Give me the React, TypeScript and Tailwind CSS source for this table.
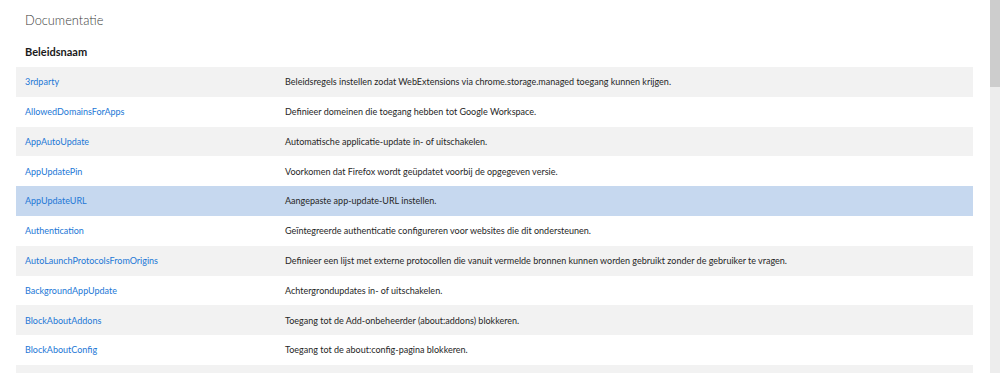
import React from "react";

const rows: [string, string][] = [
  ["3rdparty", "Beleidsregels instellen zodat WebExtensions via chrome.storage.managed toegang kunnen krijgen."],
  ["AllowedDomainsForApps", "Definieer domeinen die toegang hebben tot Google Workspace."],
  ["AppAutoUpdate", "Automatische applicatie-update in- of uitschakelen."],
  ["AppUpdatePin", "Voorkomen dat Firefox wordt geüpdatet voorbij de opgegeven versie."],
  ["AppUpdateURL", "Aangepaste app-update-URL instellen."],
  ["Authentication", "Geïntegreerde authenticatie configureren voor websites die dit ondersteunen."],
  ["AutoLaunchProtocolsFromOrigins", "Definieer een lijst met externe protocollen die vanuit vermelde bronnen kunnen worden gebruikt zonder de gebruiker te vragen."],
  ["BackgroundAppUpdate", "Achtergrondupdates in- of uitschakelen."],
  ["BlockAboutAddons", "Toegang tot de Add-onbeheerder (about:addons) blokkeren."],
  ["BlockAboutConfig", "Toegang tot de about:config-pagina blokkeren."],
  ["BlockAboutProfiles", "Toegang tot de about:profiles-pagina blokkeren."],
];

export default function App() {
  return (
    <div className="flex h-[373px] w-[1000px] overflow-hidden bg-white font-[Lato,sans-serif]">
      <div className="flex-1 pl-4 pr-[17px]">
        <div className="pl-[9px] pt-[12px] text-[12.8px] font-light leading-[17px] text-[#3c3c3c]">
          Documentatie
        </div>
        <div className="pl-[9px] pt-[16px] pb-[8px] text-[11px] font-bold leading-[14px] text-[#1a1a1a]">
          Beleidsnaam
        </div>
        <div className="flex flex-col">
          {rows.map(([name, desc], i) => (
            <div
              key={name}
              className={
                "flex h-[29.8px] shrink-0 items-center text-[9px] " +
                (i === 4 ? "bg-[#c6d8ef]" : i % 2 === 0 ? "bg-[#f2f2f2]" : "bg-white")
              }
            >
              <div className="w-[269px] shrink-0 pl-[9px] text-[#2277d6]">{name}</div>
              <div className="whitespace-nowrap text-[#262626]">{desc}</div>
            </div>
          ))}
        </div>
      </div>
      <div className="flex w-[10px] shrink-0 flex-col bg-[#ededed]">
        <div className="h-[87px] bg-[#cdcdcd]" />
      </div>
    </div>
  );
}
